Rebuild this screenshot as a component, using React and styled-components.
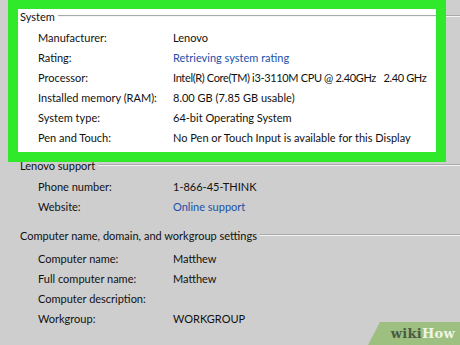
import styled, { createGlobalStyle } from "styled-components";

const Global = createGlobalStyle`
  html, body {
    margin: 0;
    padding: 0;
    background: #cecece;
  }
  body {
    font-family: Lato, "Noto Sans", sans-serif;
    font-size: 11px;
    color: #111;
    overflow: hidden;
  }
`;

const Page = styled.div`
  position: relative;
  width: 460px;
  height: 345px;
  overflow: hidden;
`;

const TopRow = styled.div`
  display: flex;
  align-items: flex-start;
`;

const Highlight = styled.div`
  position: relative;
  z-index: 1;
  margin-left: 8px;
  width: 418px;
  height: 143px;
  border: 10px solid #2fe92a;
  border-top-width: 9px;
  background: #fff;
`;

const Tail = styled.div`
  flex: 1;
  margin-top: 15px;
  border-top: 1px solid #a9a9a9;
  border-bottom: 1px solid #f4f4f4;
`;

const Legend = styled.div`
  display: flex;
  align-items: center;
  gap: 3px;
  height: 14px;
  padding-left: ${(p) => p.$indent || 2}px;
  margin-top: ${(p) => p.$top || 0}px;
  white-space: nowrap;
  &::after {
    content: "";
    flex: 1;
    border-top: 1px solid #a9a9a9;
    border-bottom: 1px solid #f4f4f4;
  }
`;

const Rows = styled.div`
  display: flex;
  flex-direction: column;
  padding-left: ${(p) => p.$indent || 20}px;
  margin-top: ${(p) => p.$top || 0}px;
`;

const Row = styled.div`
  display: grid;
  grid-template-columns: 135px 1fr;
  height: 20px;
  align-items: center;
  white-space: nowrap;
`;

const Value = styled.span`
  color: ${(p) => (p.$link ? "#2150a8" : "#111")};
  letter-spacing: ${(p) => (p.$tight ? "-0.35px" : "normal")};
`;

const Logo = styled.div`
  position: absolute;
  right: 0;
  bottom: 0;
  width: 92px;
  height: 23px;
  background: #9dbf80;
  clip-path: polygon(12px 0, 100% 0, 100% 100%, 0 100%);
  display: flex;
  align-items: center;
  justify-content: flex-end;
  padding-right: 5px;
  box-sizing: border-box;
  font-family: "DejaVu Serif", "Liberation Serif", serif;
  font-weight: bold;
  font-size: 13px;
  letter-spacing: 0.3px;
`;

const Wiki = styled.span`
  color: #4b5a44;
`;

const How = styled.span`
  color: #eef5e6;
`;

export default function App() {
  return (
    <Page>
      <Global />
      <TopRow>
        <Highlight>
          <Legend>System</Legend>
          <Rows $top={4}>
            <Row><span>Manufacturer:</span><Value>Lenovo</Value></Row>
            <Row><span>Rating:</span><Value $link>Retrieving system rating</Value></Row>
            <Row><span>Processor:</span><Value $tight>Intel(R) Core(TM) i3-3110M CPU @ 2.40GHz&nbsp;&nbsp; 2.40 GHz</Value></Row>
            <Row><span>Installed memory (RAM):</span><Value>8.00 GB (7.85 GB usable)</Value></Row>
            <Row><span>System type:</span><Value>64-bit Operating System</Value></Row>
            <Row><span>Pen and Touch:</span><Value>No Pen or Touch Input is available for this Display</Value></Row>
          </Rows>
        </Highlight>
        <Tail />
      </TopRow>
      <Legend $indent={20} $top={-4}>Lenovo support</Legend>
      <Rows $indent={38} $top={4}>
        <Row><span>Phone number:</span><Value>1-866-45-THINK</Value></Row>
        <Row><span>Website:</span><Value $link>Online support</Value></Row>
      </Rows>
      <Legend $indent={20} $top={12}>Computer name, domain, and workgroup settings</Legend>
      <Rows $indent={38} $top={6}>
        <Row><span>Computer name:</span><Value>Matthew</Value></Row>
        <Row><span>Full computer name:</span><Value>Matthew</Value></Row>
        <Row><span>Computer description:</span><Value /></Row>
        <Row><span>Workgroup:</span><Value>WORKGROUP</Value></Row>
      </Rows>
      <Logo>
        <Wiki>wiki</Wiki>
        <How>How</How>
      </Logo>
    </Page>
  );
}
